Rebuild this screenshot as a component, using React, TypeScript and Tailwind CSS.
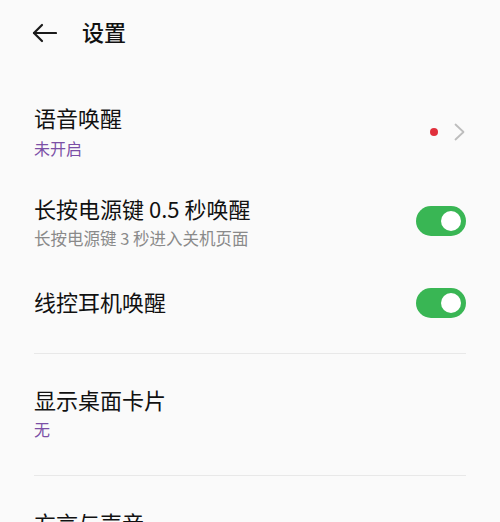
import React from 'react';

const font = { fontFamily: '"Noto Sans CJK SC", "Noto Sans", sans-serif' };

const Toggle: React.FC<{ className?: string }> = ({ className = '' }) => (
    <div className={`w-[50px] h-[30px] rounded-full bg-[#39b654] flex items-center justify-end pr-[5px] shrink-0 ${className}`}>
        <div className="w-[20px] h-[20px] rounded-full bg-white" />
    </div>
);

export default function App() {
    return (
        <div className="w-[500px] h-[522px] overflow-hidden bg-[#fafafa] text-[#111]" style={font}>
            <div className="flex items-center h-[66px] pl-[32px]">
                <svg width="25" height="20" viewBox="0 0 25 20" fill="none" stroke="#1a1a1a" strokeWidth="2.2" strokeLinecap="round" strokeLinejoin="round">
                    <path d="M24 10H2" />
                    <path d="M10 2L2 10l8 8" />
                </svg>
                <span className="ml-[25px] mb-[5px] text-[22px] font-medium leading-[30px]">设置</span>
            </div>

            <div className="px-[34px]">
                {/* 语音唤醒 */}
                <div className="flex items-start justify-between mt-[36px] h-[57px]">
                    <div>
                        <div className="text-[22px] leading-[30px]">语音唤醒</div>
                        <div className="text-[16px] leading-[22px] mt-[5px] text-[#7b4fa6]">未开启</div>
                    </div>
                    <div className="flex items-center gap-[16px] pr-[1px] mt-[21px]">
                        <div className="w-[8px] h-[8px] rounded-full bg-[#e0303c]" />
                        <svg width="11" height="18" viewBox="0 0 11 18" fill="none" stroke="#bdbdbd" strokeWidth="1.8" strokeLinecap="round" strokeLinejoin="round">
                            <path d="M1.5 1.5L9.5 9l-8 7.5" />
                        </svg>
                    </div>
                </div>

                {/* 长按电源键 */}
                <div className="flex items-start justify-between mt-[34px] h-[56px]">
                    <div>
                        <div className="text-[22px] leading-[30px]">长按电源键 0.5 秒唤醒</div>
                        <div className="text-[16.5px] leading-[22px] mt-[4px] text-[#8a8a8a]">长按电源键 3 秒进入关机页面</div>
                    </div>
                    <Toggle className="mt-[13px]" />
                </div>

                {/* 线控耳机 */}
                <div className="flex items-start justify-between mt-[37px] h-[32px]">
                    <div className="text-[22px] leading-[30px]">线控耳机唤醒</div>
                    <Toggle className="mt-[2px]" />
                </div>

                <div className="mt-[35px] border-t border-[#e8e8e8]" />

                <div className="mt-[30px] h-[56px]">
                    <div className="text-[22px] leading-[30px]">显示桌面卡片</div>
                    <div className="text-[16px] leading-[22px] mt-[4px] text-[#7b4fa6]">无</div>
                </div>

                <div className="mt-[35px] border-t border-[#e8e8e8]" />

                <div className="mt-[31px]">
                    <div className="text-[22px] leading-[30px]">方言与声音</div>
                </div>
            </div>
        </div>
    );
}
